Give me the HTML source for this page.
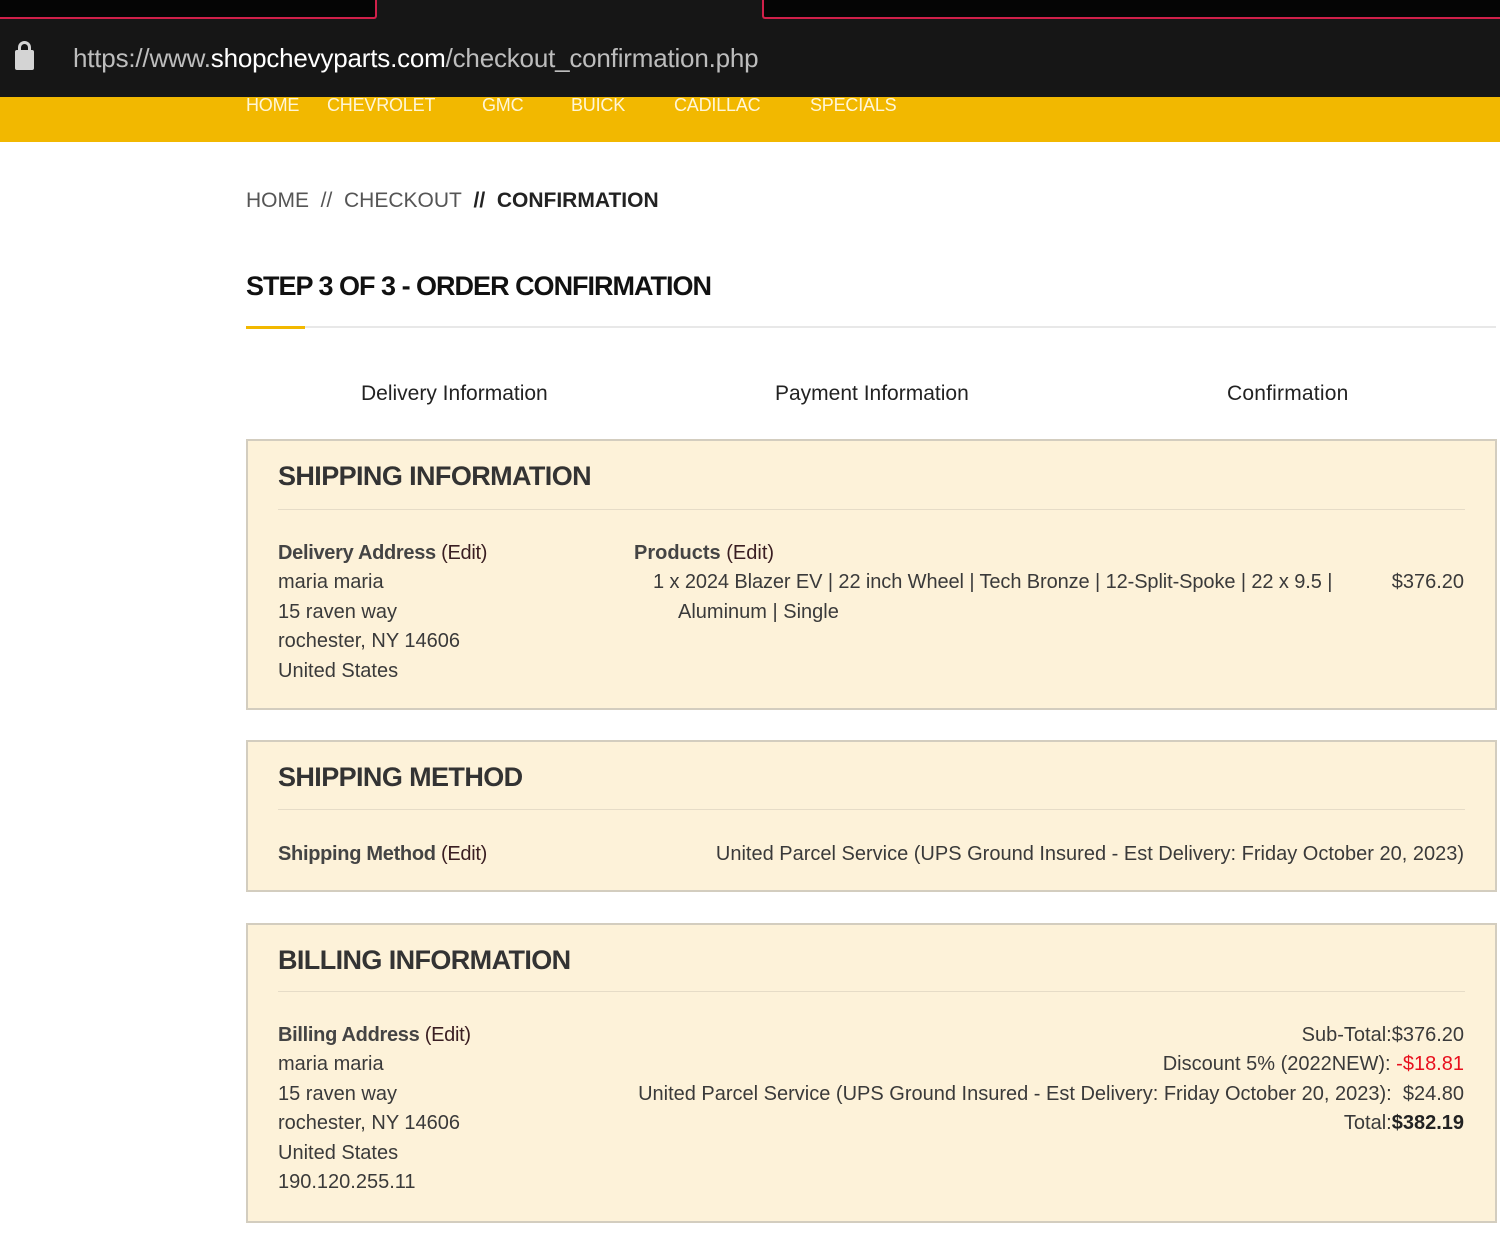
<!DOCTYPE html>
<html><head><meta charset="utf-8"><style>
*{margin:0;padding:0;box-sizing:border-box}
body{width:1500px;height:1235px;background:#fff;position:relative;overflow:hidden;font-family:"Liberation Sans",sans-serif;color:#333}
.t{position:absolute;white-space:nowrap;font-size:20px;line-height:22px;letter-spacing:0px;color:#3a3a3a}
.r{right:36px;text-align:right}
.b{font-weight:bold;color:#444}
.e{color:#3a1e22}
.box{position:absolute;left:246px;width:1251px;background:#fdf2d9;border:2px solid #d3cdbf}
.hr{position:absolute;left:278px;width:1187px;height:1px;background:#e6dcc7}
.h{position:absolute;left:278px;font-size:27px;line-height:30px;letter-spacing:-0.6px;color:#333;font-weight:bold;white-space:nowrap}
.nav{position:absolute;top:95px;font-size:18px;color:#fff6d8;letter-spacing:-0.2px;white-space:nowrap}
</style></head><body>
<div style="position:absolute;left:0;top:0;width:1500px;height:97px;background:#161616"></div>
<div style="position:absolute;left:0;top:0;width:377px;height:19px;background:#050505;border:2px solid #d0204a;border-top:none;border-left:none;border-radius:0 0 3px 0"></div>
<div style="position:absolute;left:762px;top:0;width:738px;height:19px;background:#050505;border:2px solid #d0204a;border-top:none;border-right:none;border-radius:0 0 0 3px"></div>
<div style="position:absolute;left:15px;top:50px;width:19px;height:20px;background:#d4d4d4;border-radius:2px"></div>
<div style="position:absolute;left:18px;top:41px;width:13px;height:14px;border:3px solid #d4d4d4;border-bottom:none;border-radius:7px 7px 0 0"></div>
<div style="position:absolute;left:73px;top:43px;font-size:26px;letter-spacing:-0.2px;color:#bdbdbd;white-space:nowrap">https://www.<span style="color:#fff">shopchevyparts.com</span>/checkout_confirmation.php</div>
<div style="position:absolute;left:0;top:97px;width:1500px;height:45px;background:#f2b800"></div>
<div class="nav" style="left:246px">HOME</div>
<div class="nav" style="left:327px">CHEVROLET</div>
<div class="nav" style="left:482px">GMC</div>
<div class="nav" style="left:571px">BUICK</div>
<div class="nav" style="left:674px">CADILLAC</div>
<div class="nav" style="left:810px">SPECIALS</div>

<div class="t" style="left:246px;top:190px;font-size:21px;color:#555;letter-spacing:0px">HOME&nbsp; // &nbsp;CHECKOUT&nbsp; <b style="color:#222">//&nbsp; CONFIRMATION</b></div>
<div class="h" style="left:246px;top:271px;color:#111;letter-spacing:-1px">STEP 3 OF 3 - ORDER CONFIRMATION</div>
<div style="position:absolute;left:246px;top:326px;width:1250px;height:2px;background:#e8e8e8"></div>
<div style="position:absolute;left:246px;top:326px;width:59px;height:3px;background:#f2b800"></div>

<div class="t" style="left:361px;top:383px;color:#222;font-size:21px;letter-spacing:0px">Delivery Information</div>
<div class="t" style="left:775px;top:383px;color:#222;font-size:21px;letter-spacing:0px">Payment Information</div>
<div class="t" style="left:1227px;top:383px;color:#222;font-size:21px;letter-spacing:0.2px">Confirmation</div>

<div class="box" style="top:439px;height:271px"></div>
<div class="h" style="top:461px">SHIPPING INFORMATION</div>
<div class="hr" style="top:509px"></div>
<div class="t" style="left:278px;top:542px;letter-spacing:-0.3px"><span class="b">Delivery Address</span> <span class="e">(Edit)</span></div>
<div class="t" style="left:278px;top:571px">maria maria</div>
<div class="t" style="left:278px;top:601px">15 raven way</div>
<div class="t" style="left:278px;top:630px">rochester, NY 14606</div>
<div class="t" style="left:278px;top:660px">United States</div>
<div class="t" style="left:634px;top:542px"><span class="b">Products</span> <span class="e">(Edit)</span></div>
<div class="t" style="left:653px;top:571px;letter-spacing:-0.1px">1 x 2024 Blazer EV | 22 inch Wheel | Tech Bronze | 12-Split-Spoke | 22 x 9.5 |</div>
<div class="t" style="left:678px;top:601px">Aluminum | Single</div>
<div class="t r" style="top:571px">$376.20</div>

<div class="box" style="top:740px;height:152px"></div>
<div class="h" style="top:762px">SHIPPING METHOD</div>
<div class="hr" style="top:809px"></div>
<div class="t" style="left:278px;top:843px;letter-spacing:-0.3px"><span class="b">Shipping Method</span> <span class="e">(Edit)</span></div>
<div class="t r" style="top:843px">United Parcel Service (UPS Ground Insured - Est Delivery: Friday October 20, 2023)</div>

<div class="box" style="top:923px;height:300px"></div>
<div class="h" style="top:945px">BILLING INFORMATION</div>
<div class="hr" style="top:991px"></div>
<div class="t" style="left:278px;top:1024px;letter-spacing:-0.3px"><span class="b">Billing Address</span> <span class="e">(Edit)</span></div>
<div class="t" style="left:278px;top:1053px">maria maria</div>
<div class="t" style="left:278px;top:1083px">15 raven way</div>
<div class="t" style="left:278px;top:1112px">rochester, NY 14606</div>
<div class="t" style="left:278px;top:1142px">United States</div>
<div class="t" style="left:278px;top:1171px">190.120.255.11</div>
<div class="t r" style="top:1024px">Sub-Total:$376.20</div>
<div class="t r" style="top:1053px">Discount 5% (2022NEW): <span style="color:#e8101e">-$18.81</span></div>
<div class="t r" style="top:1083px">United Parcel Service (UPS Ground Insured - Est Delivery: Friday October 20, 2023):&nbsp; $24.80</div>
<div class="t r" style="top:1112px">Total:<b style="color:#222">$382.19</b></div>
</body></html>
